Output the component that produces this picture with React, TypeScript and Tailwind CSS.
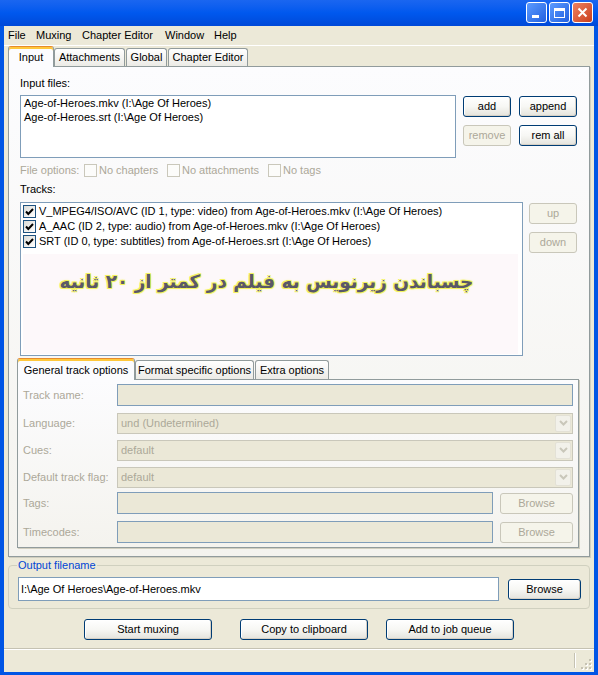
import React from "react";

function Btn({
  children,
  disabled,
  className = "",
}: {
  children: React.ReactNode;
  disabled?: boolean;
  className?: string;
}) {
  return (
    <div
      className={`flex items-center justify-center shrink-0 rounded-[3px] border text-[11px] h-[21px] ${
        disabled
          ? "border-[#C9C7BA] text-[#ACA899] bg-[#F5F4EA]"
          : "border-[#003C74] text-black bg-linear-to-b from-white via-[#F7F7F4] to-[#E4E3DC] shadow-[inset_-1px_-1px_0_#D6D0C5,inset_1px_1px_0_#FFFFFF]"
      } ${className}`}
    >
      {children}
    </div>
  );
}

function Check({ checked, disabled }: { checked?: boolean; disabled?: boolean }) {
  return (
    <div
      className={`w-[13px] h-[13px] shrink-0 border flex items-center justify-center ${
        disabled
          ? "border-[#CAC8BB] bg-[#FCFCFA]"
          : "border-[#1C5180] bg-linear-to-br from-[#DCDCD7] to-white"
      }`}
    >
      {checked && (
        <svg width="11" height="11" viewBox="0 0 11 11">
          <polyline points="2,5.5 4.3,8 9,3" fill="none" stroke="#000" strokeWidth="2" />
        </svg>
      )}
    </div>
  );
}

function Combo({ text }: { text: string }) {
  return (
    <div className="flex-1 h-[21px] border border-[#C9C7BA] bg-[#EBE8D7] flex items-center">
      <span className="flex-1 pl-[3px] text-[#ACA899]">{text}</span>
      <div className="w-[16px] h-[17px] mr-[1px] rounded-[2px] bg-[#F2F1EA] border border-[#E3E1D6] flex items-center justify-center">
        <svg width="9" height="6" viewBox="0 0 9 6">
          <polyline points="1,1 4.5,4.5 8,1" fill="none" stroke="#C9C7BA" strokeWidth="2" />
        </svg>
      </div>
    </div>
  );
}

function Field({ className = "" }: { className?: string }) {
  return <div className={`h-[22px] border border-[#7F9DB9] bg-[#EBE8D7] ${className}`} />;
}

function SubLabel({ children }: { children: React.ReactNode }) {
  return <div className="w-[94px] shrink-0 text-[#ACA899]">{children}</div>;
}

export default function App() {
  return (
    <div className="w-[598px] h-[675px] flex flex-col bg-[#0055E5] overflow-hidden font-['Liberation_Sans',Arial,sans-serif] text-[11px] leading-[13px] text-black select-none">
      {/* title bar */}
      <div className="h-[26px] shrink-0 flex justify-end items-start pt-[2px] pr-[5px] gap-[2px] bg-linear-to-b from-[#1A66F0] via-[#0058EE] to-[#0049D8]">
        <div className="w-[21px] h-[21px] rounded-[3px] border border-white bg-linear-to-br from-[#5C9BFF] to-[#2260E0] flex items-end pl-[5px] pb-[4px]">
          <div className="w-[7px] h-[3px] bg-white" />
        </div>
        <div className="w-[21px] h-[21px] rounded-[3px] border border-white bg-linear-to-br from-[#5C9BFF] to-[#2260E0] flex items-center justify-center">
          <div className="w-[11px] h-[10px] border border-white border-t-[3px]" />
        </div>
        <div className="w-[21px] h-[21px] rounded-[3px] border border-white bg-linear-to-br from-[#EE8060] to-[#C93D1A] flex items-center justify-center">
          <svg width="11" height="11" viewBox="0 0 11 11">
            <path d="M1.5 1.5 L9.5 9.5 M9.5 1.5 L1.5 9.5" stroke="#fff" strokeWidth="2" />
          </svg>
        </div>
      </div>

      {/* body */}
      <div className="flex-1 flex flex-col mx-[4px] mb-[3px] bg-[#ECE9D8]">
        {/* menu */}
        <div className="h-[20px] shrink-0 flex items-center pl-[4px] border-b border-white">
          <span className="w-[28px]">File</span>
          <span className="w-[46px]">Muxing</span>
          <span className="w-[83px]">Chapter Editor</span>
          <span className="w-[49px]">Window</span>
          <span>Help</span>
        </div>

        <div className="flex flex-col px-[4px]">
          {/* tabs */}
          <div className="h-[20px] flex items-end">
            <div className="w-[46px] h-[21px] mb-[-1px] relative z-10 bg-[#FCFCFE] border border-b-0 border-[#919B9C] border-t-[#E68B2C] rounded-t-[3px] shadow-[inset_0_2px_0_#FFC83C] flex items-center justify-center pt-[1px]">
              Input
            </div>
            <div className="w-[71px] h-[18px] bg-linear-to-b from-white to-[#ECEBE6] border border-b-0 border-[#919B9C] rounded-t-[3px] flex items-center justify-center">
              Attachments
            </div>
            <div className="w-[41px] h-[18px] ml-[1px] bg-linear-to-b from-white to-[#ECEBE6] border border-b-0 border-[#919B9C] rounded-t-[3px] flex items-center justify-center">
              Global
            </div>
            <div className="w-[80px] h-[18px] ml-[1px] bg-linear-to-b from-white to-[#ECEBE6] border border-b-0 border-[#919B9C] rounded-t-[3px] flex items-center justify-center">
              Chapter Editor
            </div>
          </div>

          {/* main panel */}
          <div className="h-[491px] border border-[#919B9C] bg-linear-to-b from-[#FCFCFE] to-[#F4F3EE] shadow-[1px_1px_0_#D0CEBF] flex flex-col px-[8px]">
            <div className="pl-[3px] flex flex-col">
              <div className="mt-[10px]">Input files:</div>
              <div className="mt-[5px] flex items-start">
                <div className="w-[436px] h-[63px] border border-[#7F9DB9] bg-white pl-[3px] leading-[14px]">
                  <div>Age-of-Heroes.mkv (I:\Age Of Heroes)</div>
                  <div>Age-of-Heroes.srt (I:\Age Of Heroes)</div>
                </div>
                <div className="ml-[7px] mt-[1px] flex flex-col gap-[8px]">
                  <div className="flex gap-[8px]">
                    <Btn className="w-[48px]">add</Btn>
                    <Btn className="w-[58px]">append</Btn>
                  </div>
                  <div className="flex gap-[8px]">
                    <Btn disabled className="w-[48px]">remove</Btn>
                    <Btn className="w-[58px]">rem all</Btn>
                  </div>
                </div>
              </div>

              <div className="mt-[6px] h-[13px] flex items-center text-[#ACA899]">
                <span className="w-[64px]">File options:</span>
                <div className="w-[83px] flex items-center">
                  <Check disabled />
                  <span className="ml-[2px]">No chapters</span>
                </div>
                <div className="w-[101px] flex items-center">
                  <Check disabled />
                  <span className="ml-[2px]">No attachments</span>
                </div>
                <div className="flex items-center">
                  <Check disabled />
                  <span className="ml-[2px]">No tags</span>
                </div>
              </div>

              <div className="mt-[6px]">Tracks:</div>
              <div className="mt-[6px] flex items-start">
                <div className="w-[503px] h-[154px] border border-[#7F9DB9] bg-white flex flex-col pt-[1px] pl-[2px] pr-[4px]">
                  {[
                    "V_MPEG4/ISO/AVC (ID 1, type: video) from Age-of-Heroes.mkv (I:\\Age Of Heroes)",
                    "A_AAC (ID 2, type: audio) from Age-of-Heroes.mkv (I:\\Age Of Heroes)",
                    "SRT (ID 0, type: subtitles) from Age-of-Heroes.srt (I:\\Age Of Heroes)",
                  ].map((t) => (
                    <div key={t} className="h-[15px] flex items-center">
                      <Check checked />
                      <span className="ml-[3px] whitespace-nowrap">{t}</span>
                    </div>
                  ))}
                  <div className="flex-1 mt-[5px] mb-[1px] bg-[#FDF8FA] flex justify-center pt-[14px] pr-[8px]">
                    <div
                      dir="rtl"
                      className="font-['DejaVu_Sans',sans-serif] font-bold text-[18.5px] leading-[28px] text-[#5A5868] [text-shadow:1px_1px_0_#F2F25E,-1px_-1px_0_#F2F25E,1px_-1px_0_#F2F25E,-1px_1px_0_#F2F25E,0_0_3px_#FFFF70] whitespace-nowrap"
                    >
                      چسباندن زیرنویس به فیلم در کمتر از ۲۰ ثانیه
                    </div>
                  </div>
                </div>
                <div className="ml-[6px] mt-[1px] flex flex-col gap-[8px]">
                  <Btn disabled className="w-[48px]">up</Btn>
                  <Btn disabled className="w-[48px]">down</Btn>
                </div>
              </div>
            </div>

            {/* sub tabs */}
            <div className="mt-[2px] h-[21px] flex items-end">
              <div className="w-[118px] h-[22px] mb-[-1px] relative z-10 bg-[#FCFCFE] border border-b-0 border-[#919B9C] border-t-[#E68B2C] rounded-t-[3px] shadow-[inset_0_2px_0_#FFC83C] flex items-center justify-center pt-[1px]">
                General track options
              </div>
              <div className="w-[119px] h-[19px] bg-linear-to-b from-white to-[#ECEBE6] border border-b-0 border-[#919B9C] rounded-t-[3px] flex items-center justify-center">
                Format specific options
              </div>
              <div className="w-[74px] h-[19px] ml-[1px] bg-linear-to-b from-white to-[#ECEBE6] border border-b-0 border-[#919B9C] rounded-t-[3px] flex items-center justify-center">
                Extra options
              </div>
            </div>
            <div className="w-[562px] h-[169px] border border-[#919B9C] bg-linear-to-b from-[#FCFCFE] to-[#F4F3EE] shadow-[1px_1px_0_#D0CEBF] flex flex-col pl-[5px] pr-[5px] pt-[4px] gap-[5px]">
              <div className="h-[22px] flex items-center">
                <SubLabel>Track name:</SubLabel>
                <Field className="flex-1" />
              </div>
              <div className="h-[22px] mt-[1px] flex items-center">
                <SubLabel>Language:</SubLabel>
                <Combo text="und (Undetermined)" />
              </div>
              <div className="h-[22px] flex items-center">
                <SubLabel>Cues:</SubLabel>
                <Combo text="default" />
              </div>
              <div className="h-[22px] flex items-center">
                <SubLabel>Default track flag:</SubLabel>
                <Combo text="default" />
              </div>
              <div className="h-[22px] -mt-[1px] flex items-center">
                <SubLabel>Tags:</SubLabel>
                <Field className="w-[376px]" />
                <Btn disabled className="w-[73px] ml-[7px]">Browse</Btn>
              </div>
              <div className="h-[22px] mt-[2px] flex items-center">
                <SubLabel>Timecodes:</SubLabel>
                <Field className="w-[376px]" />
                <Btn disabled className="w-[73px] ml-[7px]">Browse</Btn>
              </div>
            </div>
          </div>

          {/* output */}
          <fieldset className="mt-[2px] border border-[#D0D0BF] rounded-[4px] pl-[9px] pr-[7px] pb-[7px]">
            <legend className="-ml-[1px] px-[1px] text-[#0046D5]">Output filename</legend>
            <div className="mt-[5px] flex items-center">
              <div className="w-[481px] h-[24px] border border-[#7F9DB9] bg-white flex items-center pl-[2px]">
                I:\Age Of Heroes\Age-of-Heroes.mkv
              </div>
              <Btn className="w-[73px] ml-[9px]">Browse</Btn>
            </div>
          </fieldset>

          {/* actions */}
          <div className="mt-[10px] flex">
            <Btn className="w-[128px] ml-[76px]">Start muxing</Btn>
            <Btn className="w-[128px] ml-[28px]">Copy to clipboard</Btn>
            <Btn className="w-[128px] ml-[18px]">Add to job queue</Btn>
          </div>
        </div>

        {/* status bar */}
        <div className="mt-auto h-[24px] shrink-0 border-t border-[#C5C2B2] shadow-[inset_0_1px_0_#FFFFFF] flex items-stretch">
          <div className="flex-1" />
          <div className="w-[2px] my-[4px] border-l border-[#C5C2B2] bg-white" />
          <div className="w-[18px] flex items-end justify-end pr-[2px] pb-[2px]">
            <svg width="11" height="11" viewBox="0 0 11 11">
              {[
                [9, 1], [9, 5], [5, 5], [9, 9], [5, 9], [1, 9],
              ].map(([x, y], i) => (
                <g key={i}>
                  <rect x={x} y={y} width="2" height="2" fill="#FFFFFF" />
                  <rect x={x - 1} y={y - 1} width="2" height="2" fill="#C5C2B2" />
                </g>
              ))}
            </svg>
          </div>
        </div>
      </div>
    </div>
  );
}
